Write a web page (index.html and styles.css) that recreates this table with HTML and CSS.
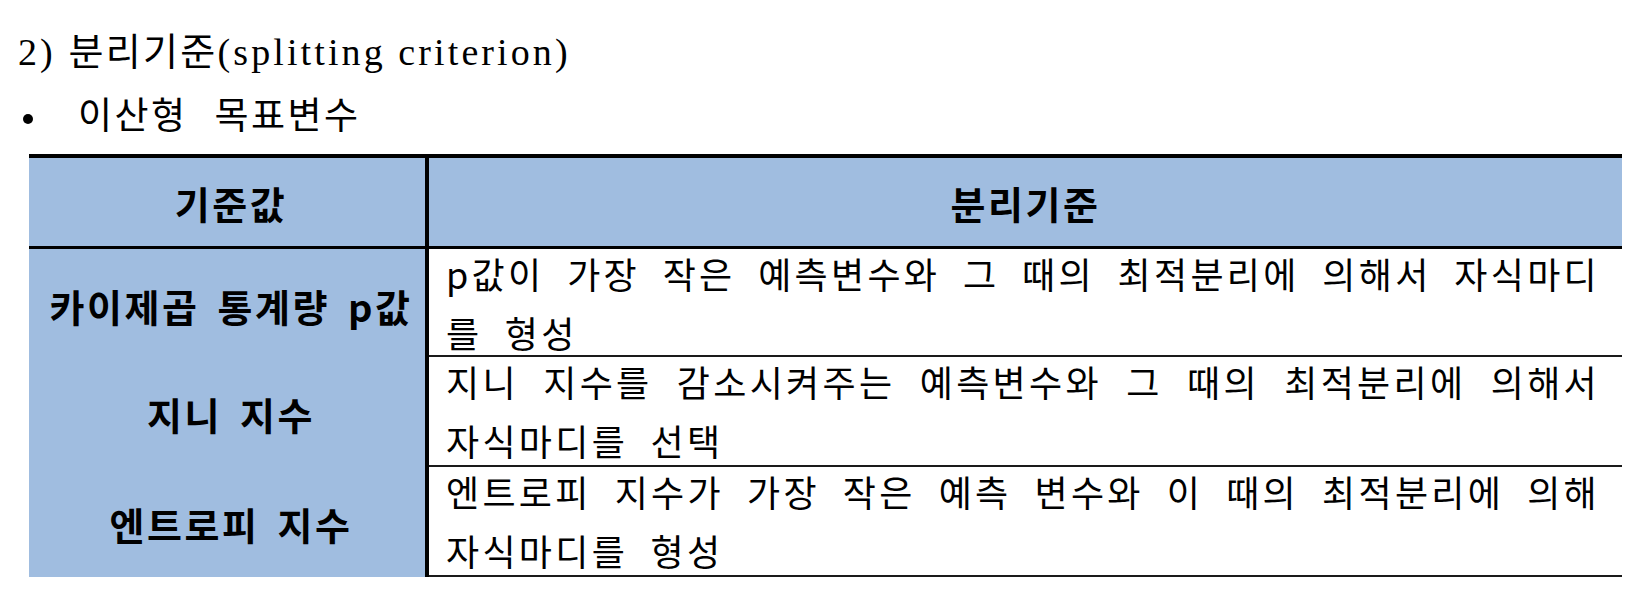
FILE: index.html
```html
<!DOCTYPE html>
<html lang="ko">
<head>
<meta charset="utf-8">
<link rel="stylesheet" href="styles.css">
</head>
<body>
<div class="doc">
  <div class="h1"><span class="lat">2) </span><span class="ko">분리기준</span><span class="lat">(splitting criterion)</span></div>
  <div class="h2"><span class="dot"></span><span class="ko2">이산형 목표변수</span></div>
  <div class="tbl">
    <div class="row head">
      <div class="c1">기준값</div>
      <div class="c2 hc">분리기준</div>
    </div>
    <div class="row r1">
      <div class="c1">카이제곱 통계량 p값</div>
      <div class="c2">
        <div class="ln just">p값이 가장 작은 예측변수와 그 때의 최적분리에 의해서 자식마디</div>
        <div class="ln">를 형성</div>
      </div>
    </div>
    <div class="row r2">
      <div class="c1">지니 지수</div>
      <div class="c2">
        <div class="ln just">지니 지수를 감소시켜주는 예측변수와 그 때의 최적분리에 의해서</div>
        <div class="ln">자식마디를 선택</div>
      </div>
    </div>
    <div class="row r3">
      <div class="c1">엔트로피 지수</div>
      <div class="c2">
        <div class="ln just">엔트로피 지수가 가장 작은 예측 변수와 이 때의 최적분리에 의해</div>
        <div class="ln">자식마디를 형성</div>
      </div>
    </div>
  </div>
</div>
</body>
</html>
```
FILE: styles.css
```css
html, body {
  margin: 0;
  padding: 0;
  background: #fff;
}
body {
  color: #000;
  font-family: "Noto Sans CJK KR", sans-serif;
}
.doc {
  padding-top: 19px;
}
.h1 {
  height: 60px;
  line-height: 60px;
  padding-left: 18px;
  white-space: nowrap;
}
.h1 .lat {
  font-family: "Liberation Serif", "Noto Sans CJK KR", serif;
  font-size: 38px;
  letter-spacing: 3.1px;
}
.h1 .ko {
  font-size: 38px;
  letter-spacing: 2.3px;
}
.h2 {
  display: flex;
  align-items: center;
  height: 60px;
  margin-top: 4px;
}
.dot {
  width: 10px;
  height: 10px;
  border-radius: 50%;
  background: #000;
  margin-left: 23px;
  margin-top: 12px;
  flex: none;
}
.ko2 {
  margin-left: 45px;
  font-size: 37px;
  letter-spacing: 2.5px;
  word-spacing: 14px;
  white-space: nowrap;
}
.tbl {
  margin: 11px 0 0 29px;
  width: 1593px;
  border-top: 4px solid #000;
}
.row {
  display: grid;
  grid-template-columns: 396px 1fr;
  border-bottom: 2px solid #1a1a1a;
}
.head {
  height: 88px;
  border-bottom: 3px solid #000;
  background: #a0bde0;
}
.r1 { height: 106px; }
.r2, .r3 { height: 108px; }
.c1 {
  background: #a0bde0;
  display: flex;
  align-items: center;
  justify-content: center;
  padding-left: 8px;
  font-weight: 700;
  font-size: 38px;
  letter-spacing: 2.5px;
  word-spacing: 5px;
  white-space: nowrap;
}
.c2 {
  border-left: 4px solid #000;
  padding: 0 22px 0 17px;
  font-size: 36px;
  letter-spacing: 3.3px;
  word-spacing: 9px;
}
.hc {
  display: flex;
  align-items: center;
  justify-content: center;
  font-weight: 700;
  font-size: 38px;
  letter-spacing: 2.5px;
  padding: 0;
}
.ln {
  line-height: 59px;
}
.ln:first-child {
  margin-top: -5px;
}
.just {
  word-spacing: 0;
  text-align: justify;
  text-align-last: justify;
}
```
